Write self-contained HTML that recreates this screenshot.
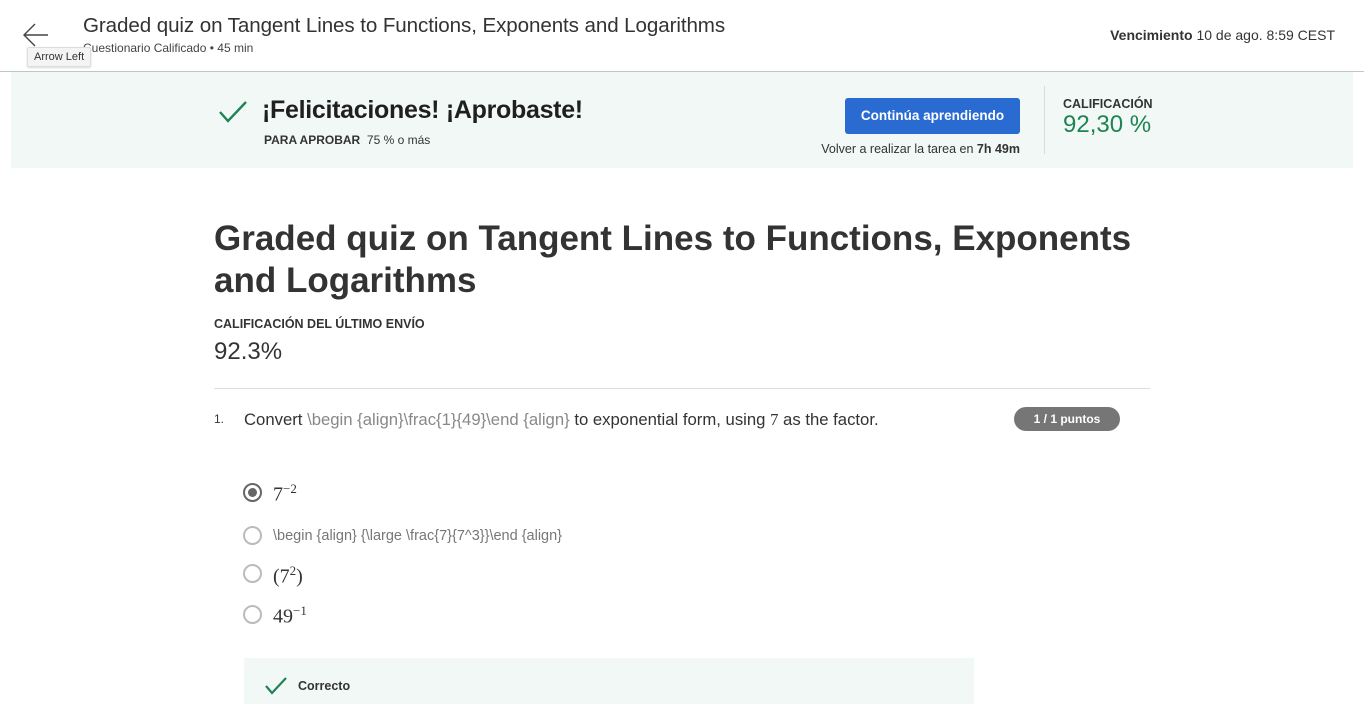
<!DOCTYPE html>
<html><head><meta charset="utf-8"><style>
*{margin:0;padding:0;box-sizing:border-box}
body{width:1364px;height:704px;overflow:hidden;background:#fff;font-family:"Liberation Sans",sans-serif;color:#1f1f1f;position:relative}
.abs{position:absolute;white-space:nowrap}
.math{font-family:"Liberation Serif",serif;color:#333}
.radio{position:absolute;width:19px;height:19px;border:2px solid #bbb;border-radius:50%;background:#fff}
</style></head><body>
<svg class="abs" style="left:22px;top:22px" width="28" height="26" viewBox="0 0 28 26"><path d="M26 13H3M13 2L2 13l11 11" fill="none" stroke="#444" stroke-width="1.4"/></svg>
<div class="abs" style="left:83px;top:14px;font-size:20.6px;color:#333;letter-spacing:-0.1px">Graded quiz on Tangent Lines to Functions, Exponents and Logarithms</div>
<div class="abs" style="left:83px;top:41px;font-size:12px;color:#444">Cuestionario Calificado • 45 min</div>
<div class="abs" style="left:27px;top:47px;height:20px;padding:0 6px;font-size:11px;line-height:19px;color:#333;background:#f4f4f4;border:1px solid #ddd;border-radius:2px;box-shadow:0 1px 2px rgba(0,0,0,.15)">Arrow Left</div>
<div class="abs" style="right:29px;top:27px;font-size:14px;color:#333"><b>Vencimiento</b> 10 de ago. 8:59 CEST</div>
<div class="abs" style="left:0;top:71px;width:1364px;height:1px;background:#c4c4c4"></div>
<div class="abs" style="left:11px;top:72px;width:1342px;height:96px;background:#f1f8f5"></div>
<svg class="abs" style="left:218px;top:100px" width="30" height="24" viewBox="0 0 30 24"><path d="M2 12l8 9L28 2" fill="none" stroke="#1f8354" stroke-width="2.4"/></svg>
<div class="abs" style="left:262px;top:96px;font-size:25px;font-weight:bold;color:#1f1f1f;letter-spacing:-0.3px">¡Felicitaciones! ¡Aprobaste!</div>
<div class="abs" style="left:264px;top:133px;font-size:12px;color:#333"><b>PARA APROBAR</b>&nbsp; 75 % o más</div>
<div class="abs" style="left:845px;top:98px;width:175px;height:36px;background:#2a6bd2;border-radius:3px;color:#fff;font-size:13.5px;line-height:36px;text-align:center;font-weight:600">Continúa aprendiendo</div>
<div class="abs" style="right:344px;top:142px;font-size:12.5px;color:#333">Volver a realizar la tarea en <b>7h 49m</b></div>
<div class="abs" style="left:1044px;top:86px;width:1px;height:68px;background:#d6dcd9"></div>
<div class="abs" style="left:1063px;top:97px;font-size:12.5px;font-weight:bold;color:#333">CALIFICACIÓN</div>
<div class="abs" style="left:1063px;top:111px;font-size:24px;color:#1f8354">92,30 %</div>
<div class="abs" style="left:214px;top:218px;font-size:35px;font-weight:bold;color:#333;line-height:42px;white-space:normal;width:940px;letter-spacing:0px">Graded quiz on Tangent Lines to Functions, Exponents and Logarithms</div>
<div class="abs" style="left:214px;top:317px;font-size:12.5px;font-weight:bold;color:#333">CALIFICACIÓN DEL ÚLTIMO ENVÍO</div>
<div class="abs" style="left:214px;top:338px;font-size:24px;color:#333">92.3%</div>
<div class="abs" style="left:214px;top:388px;width:936px;height:1px;background:#ddd"></div>
<div class="abs" style="left:214px;top:412px;font-size:12px;color:#333">1.</div>
<div class="abs" style="left:244px;top:410px;font-size:16.7px;color:#333">Convert <span style="color:#888">\begin {align}\frac{1}{49}\end {align}</span> to exponential form, using <span class="math">7</span> as the factor.</div>
<div class="abs" style="left:1014px;top:407px;width:106px;height:24px;border-radius:12px;background:#767676;color:#fff;font-size:12px;font-weight:bold;line-height:24px;text-align:center">1 / 1 puntos</div>
<div class="radio" style="left:243px;top:483px;border-color:#666"><div style="position:absolute;left:3px;top:3px;width:9px;height:9px;border-radius:50%;background:#666"></div></div>
<div class="abs math" style="left:273px;top:481px;font-size:20px">7<sup style="font-size:13px">−2</sup></div>
<div class="radio" style="left:243px;top:526px"></div>
<div class="abs" style="left:273px;top:528px;font-size:14.5px;color:#777">\begin {align} {\large \frac{7}{7^3}}\end {align}</div>
<div class="radio" style="left:243px;top:564px"></div>
<div class="abs math" style="left:273px;top:563px;font-size:20px">(7<sup style="font-size:13px">2</sup>)</div>
<div class="radio" style="left:243px;top:605px"></div>
<div class="abs math" style="left:273px;top:603px;font-size:20px">49<sup style="font-size:13px">−1</sup></div>
<div class="abs" style="left:244px;top:658px;width:730px;height:46px;background:#f1f8f5"></div>
<svg class="abs" style="left:264px;top:676px" width="24" height="20" viewBox="0 0 24 20"><path d="M2 10l6 7L22 2" fill="none" stroke="#1f8354" stroke-width="2.2"/></svg>
<div class="abs" style="left:298px;top:679px;font-size:12.5px;font-weight:bold;color:#333">Correcto</div>
</body></html>
